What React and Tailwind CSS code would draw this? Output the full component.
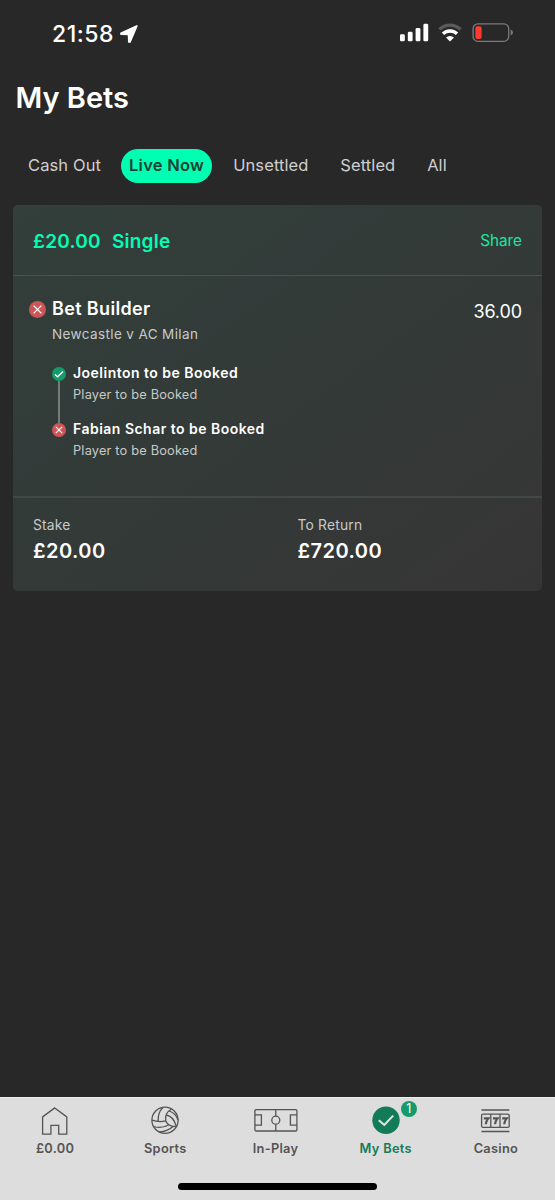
const tabs = ['Cash Out', 'Live Now', 'Unsettled', 'Settled', 'All'];

const legs = [
  { id: 1, won: true, title: 'Joelinton to be Booked', market: 'Player to be Booked' },
  { id: 2, won: false, title: 'Fabian Schar to be Booked', market: 'Player to be Booked' },
];

function ResultIcon({ won, className }) {
  return (
    <svg viewBox="0 0 14 14" className={className}>
      <circle cx="7" cy="7" r="7" fill={won ? '#149a6b' : '#cf5457'} />
      <path
        d={won ? 'M2.9 7.4 L5.6 9.8 L11 4.4' : 'M3.8 3.8 L10.2 10.2 M10.2 3.8 L3.8 10.2'}
        fill="none"
        stroke="#fff"
        strokeWidth={won ? 1.4 : 1.1}
      />
    </svg>
  );
}

function StatusBar() {
  return (
    <div className="flex h-[66px] items-start justify-between pl-[52px] pr-[41.5px]">
      <div className="flex items-center pt-[18px]">
        <span className="text-[23px] leading-8 font-medium tracking-[0.5px] text-white">21:58</span>
        <svg viewBox="0 0 18 18" className="ml-[6.5px] h-[18px] w-[18px]">
          <path
            d="M1 8.4 L16.8 1 L10 16.9 L8.9 16.9 L8.6 9.3 L1 9 Z"
            fill="#fff"
            stroke="#fff"
            strokeWidth="1.8"
            strokeLinejoin="round"
          />
        </svg>
      </div>
      <div className="flex items-start pt-[23px]">
        <svg viewBox="0 0 29 19" className="h-[19px] w-[29px]" fill="#fff">
          <rect x="0" y="11.3" width="4.8" height="7" rx="1.3" />
          <rect x="7.8" y="8.7" width="4.8" height="9.6" rx="1.3" />
          <rect x="15.6" y="5" width="4.8" height="13.3" rx="1.3" />
          <rect x="23.4" y="0.8" width="4.8" height="17.5" rx="1.3" />
        </svg>
        <svg viewBox="0 0 24 19" className="ml-[9px] h-[19px] w-6" fill="none">
          <path d="M1.4 6.4 A15.2 15.2 0 0 1 22.6 6.4" stroke="#5a5a5a" strokeWidth="3.4" />
          <path d="M5 10.8 A10 10 0 0 1 19 10.8" stroke="#fff" strokeWidth="3.4" />
          <path d="M12 18.5 L8 14.6 A5.7 5.7 0 0 1 16 14.6 Z" fill="#fff" />
        </svg>
        <svg viewBox="0 0 42 19" className="ml-[10px] h-[19px] w-[42px]">
          <rect x="1.1" y="0.9" width="35.6" height="17.4" rx="4.8" fill="none" stroke="#7a7a7a" strokeWidth="1.3" />
          <rect x="3.4" y="3.2" width="6.2" height="12.8" rx="2" fill="#ff3a30" />
          <path d="M38.6 6.6 Q41 7.4 41 9.6 Q41 11.8 38.6 12.6 Z" fill="#7a7a7a" />
        </svg>
      </div>
    </div>
  );
}

function Tabs() {
  return (
    <div className="mt-[31px] flex h-[34px] items-center pl-5 text-[16.5px] tracking-[0.1px] text-[#cfcfcf]">
      {tabs.map((tab) => (
        <button
          key={tab}
          className={
            tab === 'Live Now'
              ? 'mr-[13px] ml-3 h-[34px] rounded-full bg-[#00ffb3] px-2 pb-[2px] font-semibold tracking-[0.25px] whitespace-nowrap text-[#1f4035]'
              : 'mr-[15.8px] px-2 pb-[2px] whitespace-nowrap first:mr-0'
          }
        >
          {tab}
        </button>
      ))}
    </div>
  );
}

function BetCard() {
  return (
    <section className="mx-[13px] mt-[22px] flex h-[386px] flex-col rounded-[5px] bg-linear-to-br from-[#323f3b] via-[#333a38] to-[#363535]">
      <div className="flex h-[71px] items-center justify-between border-b border-[#48534f] px-5 pt-[3px] text-[#00ffb3]">
        <h2 className="flex gap-[11px] pt-[2px] text-[19px] font-semibold tracking-[0.25px]">
          <span>£20.00</span>
          <span>Single</span>
        </h2>
        <button className="pb-px text-[15.3px] text-[#15e8a5]">Share</button>
      </div>

      <div className="flex h-[220px] justify-between pt-[21px] pr-5 pl-[15.5px]">
        <div className="flex">
          <ResultIcon won={false} className="mt-1 mr-[6.5px] h-[17px] w-[17px]" />
          <div>
            <h3 className="text-[18px] leading-6 font-semibold tracking-[0.35px] text-white">Bet Builder</h3>
            <p className="mt-[3px] text-[13.5px] leading-5 tracking-[0.38px] text-[#c7cac9]">Newcastle v AC Milan</p>
            <ul className="mt-[19px]">
              {legs.map((leg, i) => (
                <li key={leg.id} className="flex h-14">
                  <div className="mr-[7px] flex w-[14px] flex-col items-center pt-[4px]">
                    <ResultIcon won={leg.won} className="h-[14px] w-[14px] shrink-0" />
                    {i < legs.length - 1 && <div className="-mb-1 w-[2px] flex-1 bg-[#747b79]" />}
                  </div>
                  <div>
                    <p className="text-[14px] leading-5 font-semibold tracking-[0.48px] text-white">{leg.title}</p>
                    <p className="mt-[2px] text-[12.8px] leading-5 tracking-[0.18px] text-[#c7cac9]">{leg.market}</p>
                  </div>
                </li>
              ))}
            </ul>
          </div>
        </div>
        <span className="pt-[3px] text-[18px] leading-6 tracking-[-0.1px] text-white">36.00</span>
      </div>

      <div className="grid flex-1 grid-cols-2 border-t-2 border-[#414846] px-5 pt-[17px]">
        <div>
          <p className="text-[13.8px] leading-5 tracking-[0.2px] text-[#c7cac9]">Stake</p>
          <p className="mt-1 text-[20px] leading-6 font-semibold tracking-[0.45px] text-white">£20.00</p>
        </div>
        <div className="pl-5">
          <p className="text-[13.8px] leading-5 tracking-[0.2px] text-[#c7cac9]">To Return</p>
          <p className="mt-1 text-[20px] leading-6 font-semibold tracking-[0.45px] text-white">£720.00</p>
        </div>
      </div>
    </section>
  );
}

function NavItem({ label, active, children }) {
  return (
    <button className={`flex flex-1 flex-col items-center ${active ? 'text-[#147b58]' : 'text-[#545454]'}`}>
      <span className="relative">{children}</span>
      <span className="mt-1 text-[12.8px] leading-5 font-semibold tracking-[0.3px]">{label}</span>
    </button>
  );
}

const iconProps = {
  viewBox: '0 0 44 30',
  className: 'h-[30px] w-11',
  fill: 'none',
  stroke: 'currentColor',
  strokeWidth: 1.3,
};

function BottomNav() {
  return (
    <nav className="flex h-[103px] flex-col border-t border-[#f0f0f0] bg-[#dddddd]">
      <div className="flex w-[551px] pt-[7px]">
        <NavItem label="£0.00">
          <svg {...iconProps}>
            <path d="M21.7 2.9 L33.8 11.9 V29.2 H25.7 V20.3 H17.9 V29.2 H9.6 V11.9 Z" />
          </svg>
        </NavItem>
        <NavItem label="Sports">
          <svg {...iconProps}>
            <circle cx="22" cy="15.2" r="13.1" />
            <path d="M9 15.2 Q16 17.5 22.7 15.9 Q21.5 8 28.6 4" />
            <path d="M22.7 15.9 Q25.2 21.5 33.4 21.6" />
            <path d="M15.2 16.5 Q14.5 7.5 20 2.4" />
            <path d="M23 10 Q30.5 11 33.4 21.6 M26 6 Q33 8 35 15.2" />
            <path d="M25.8 19.7 Q19 24 10.6 21.5 M30 21.5 Q24 27 16 26.8" />
          </svg>
        </NavItem>
        <NavItem label="In-Play">
          <svg {...iconProps}>
            <rect x="0.9" y="4.6" width="42" height="21.4" rx="1.2" />
            <path d="M0.9 9.8 H7.4 V20.2 H0.9 M42.9 9.8 H36.4 V20.2 H42.9 M21.8 4.6 V11 M21.8 19.4 V26" />
            <circle cx="21.8" cy="15.2" r="4" />
          </svg>
        </NavItem>
        <NavItem label="My Bets" active>
          <svg {...iconProps}>
            <circle cx="22" cy="15.2" r="13.7" fill="currentColor" stroke="none" />
            <path d="M14.8 15.2 L20.3 20 L29.2 10.6" stroke="#e8e8e8" strokeWidth="1.9" />
          </svg>
          <span className="absolute -top-[4px] left-[37px] flex h-4 w-4 items-center justify-center rounded-full bg-[#149a6b] text-[12.5px] text-white">
            1
          </span>
        </NavItem>
        <NavItem label="Casino">
          <svg {...iconProps}>
            <path d="M7.4 5 H35.4 M7.4 26.5 H35.4" strokeWidth="1.7" />
            <rect x="7.6" y="9.2" width="27.6" height="13.2" rx="1.5" />
            <path d="M16.8 9.2 V22.4 M26 9.2 V22.4" />
            <path
              d="M9.8 13.4 H14.4 Q12 16 11.8 19.2 M19 13.4 H23.6 Q21.2 16 21 19.2 M28.2 13.4 H32.8 Q30.4 16 30.2 19.2"
              strokeWidth="2.1"
            />
          </svg>
        </NavItem>
      </div>
      <div className="mt-6 ml-[178px] h-[7px] w-[199px] rounded-full bg-black" />
    </nav>
  );
}

export default function App() {
  return (
    <div className="flex h-[1200px] w-[555px] flex-col overflow-hidden bg-[#282828] font-['Inter','Liberation_Sans',sans-serif]">
      <StatusBar />
      <h1 className="mt-3 pl-[15.5px] text-[29px] leading-10 font-semibold text-white">My Bets</h1>
      <Tabs />
      <BetCard />
      <div className="flex-1" />
      <BottomNav />
    </div>
  );
}
